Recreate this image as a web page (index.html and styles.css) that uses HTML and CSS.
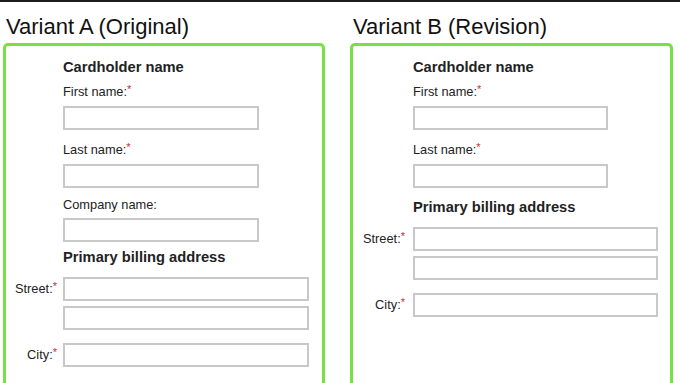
FILE: index.html
```html
<!DOCTYPE html>
<html>
<head>
<meta charset="utf-8">
<link rel="stylesheet" href="styles.css">
</head>
<body>
<div class="topbar"></div>
<div class="panels">
  <section class="panel panel-a">
    <h2 class="panel-title">Variant A (Original)</h2>
    <div class="card">
      <div class="section first">Cardholder name</div>
      <div class="label first-label">First name:<span class="req">*</span></div>
      <div class="field short"></div>
      <div class="label">Last name:<span class="req">*</span></div>
      <div class="field short"></div>
      <div class="label company">Company name:</div>
      <div class="field short company-field"></div>
      <div class="section billing">Primary billing address</div>
      <div class="side-label street">Street:<span class="req">*</span></div>
      <div class="field long street-field"></div>
      <div class="field long extra"></div>
      <div class="side-label city">City:<span class="req">*</span></div>
      <div class="field long city-field"></div>
    </div>
  </section>
  <section class="panel panel-b">
    <h2 class="panel-title">Variant B (Revision)</h2>
    <div class="card">
      <div class="section first">Cardholder name</div>
      <div class="label first-label">First name:<span class="req">*</span></div>
      <div class="field short"></div>
      <div class="label">Last name:<span class="req">*</span></div>
      <div class="field short"></div>
      <div class="section billing">Primary billing address</div>
      <div class="side-label street">Street:<span class="req">*</span></div>
      <div class="field long street-field"></div>
      <div class="field long extra"></div>
      <div class="side-label city">City:<span class="req">*</span></div>
      <div class="field long city-field"></div>
    </div>
  </section>
</div>
</body>
</html>
```

FILE: styles.css
```css
html, body {
  margin: 0;
  padding: 0;
  background: #ffffff;
  height: 383px;
  overflow: hidden;
  font-family: "Liberation Sans", Arial, sans-serif;
  color: #222222;
}

.topbar {
  height: 2px;
  background: #1c1c1c;
}

.panels {
  display: flex;
  gap: 25px;
  padding-left: 3px;
}

.panel-a {
  width: 322px;
}

.panel-b {
  width: 323px;
}

.panel-title {
  margin: 13px 0 4px 3px;
  font-size: 22px;
  line-height: 24px;
  font-weight: normal;
  color: #111111;
  white-space: nowrap;
}

.card {
  box-sizing: border-box;
  height: 400px;
  border: 3px solid #78e040;
  border-radius: 5px;
  display: grid;
  grid-template-columns: 57px 1fr;
  grid-auto-rows: min-content;
  align-content: start;
  padding-right: 13px;
}

.panel-b .card {
  grid-template-columns: 60px 1fr;
  padding-right: 12px;
}

.section,
.label,
.field {
  grid-column: 2;
}

.section {
  font-size: 14.7px;
  line-height: 18px;
  font-weight: bold;
  color: #222222;
}

.section.first {
  margin-top: 12px;
}

.panel-a .section.billing {
  margin-top: 6px;
}

.panel-b .section.billing {
  margin-top: 10px;
}

.label {
  font-size: 12.8px;
  line-height: 14px;
  margin-top: 13px;
  color: #222222;
}

.label.first-label {
  margin-top: 9px;
}

.label.company {
  margin-top: 10px;
}

.req {
  color: #c0303a;
  font-size: 11px;
  line-height: 0;
  vertical-align: 3px;
}

.field {
  box-sizing: border-box;
  height: 24px;
  margin-top: 7px;
  border: 2px solid #c8c8c8;
  background: #ffffff;
}

.field.company-field {
  margin-top: 6px;
}

.panel-a .field.short {
  width: 196px;
}

.panel-b .field.short {
  width: 195px;
}

.field.street-field {
  margin-top: 11px;
}

.field.extra {
  margin-top: 5px;
}

.field.city-field {
  margin-top: 13px;
}

.side-label {
  grid-column: 1;
  font-size: 12.8px;
  line-height: 14px;
  text-align: right;
  padding-right: 6px;
  align-self: center;
  color: #222222;
}

.side-label.street {
  margin-top: 11px;
}

.side-label.city {
  margin-top: 13px;
}

.panel-b .side-label {
  padding-right: 8px;
}
```
